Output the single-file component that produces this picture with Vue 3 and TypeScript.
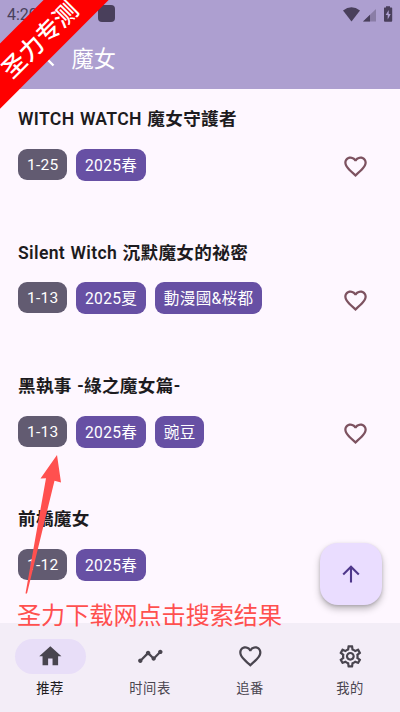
<script setup lang="ts">
interface Show {
  title: string
  episodes: string
  tags: string[]
}

interface NavItem {
  label: string
  icon: string
}

const heart =
  'M16.5 3c-1.74 0-3.41.81-4.5 2.09C10.91 3.81 9.24 3 7.5 3 4.42 3 2 5.42 2 8.5c0 3.78 3.4 6.86 8.55 11.54L12 21.35l1.45-1.32C18.6 15.36 22 12.28 22 8.5 22 5.42 19.58 3 16.5 3zm-4.4 15.55l-.1.1-.1-.1C7.14 14.24 4 11.39 4 8.5 4 6.5 5.5 5 7.5 5c1.54 0 3.04.99 3.57 2.36h1.87C13.46 5.99 14.96 5 16.5 5c2 0 3.5 1.5 3.5 3.5 0 2.89-3.14 5.74-7.9 10.05z'

const shows: Show[] = [
  { title: 'WITCH WATCH 魔女守護者', episodes: '1-25', tags: ['2025春'] },
  { title: 'Silent Witch 沉默魔女的祕密', episodes: '1-13', tags: ['2025夏', '動漫國&桜都'] },
  { title: '黑執事 -綠之魔女篇-', episodes: '1-13', tags: ['2025春', '豌豆'] },
  { title: '前橋魔女', episodes: '1-12', tags: ['2025春'] },
]

const navItems: NavItem[] = [
  { label: '推荐', icon: 'M10 20v-6h4v6h5v-8h3L12 3 2 12h3v8z' },
  {
    label: '时间表',
    icon: 'M23 8c0 1.1-.9 2-2 2-.18 0-.35-.02-.51-.07l-3.56 3.55c.05.16.07.34.07.52 0 1.1-.9 2-2 2s-2-.9-2-2c0-.18.02-.36.07-.52l-2.55-2.55c-.16.05-.34.07-.52.07s-.36-.02-.52-.07l-4.55 4.56c.05.16.07.33.07.51 0 1.1-.9 2-2 2s-2-.9-2-2 .9-2 2-2c.18 0 .35.02.51.07l4.56-4.55C8.02 9.36 8 9.18 8 9c0-1.1.9-2 2-2s2 .9 2 2c0 .18-.02.36-.07.52l2.55 2.55c.16-.05.34-.07.52-.07s.36.02.52.07l3.55-3.56C19.02 8.35 19 8.18 19 8c0-1.1.9-2 2-2s2 .9 2 2z',
  },
  { label: '追番', icon: heart },
  {
    label: '我的',
    icon: 'M19.43 12.98c.04-.32.07-.64.07-.98 0-.34-.03-.66-.07-.98l2.11-1.65c.19-.15.24-.42.12-.64l-2-3.46c-.09-.16-.26-.25-.44-.25-.06 0-.12.01-.17.03l-2.49 1c-.52-.4-1.08-.73-1.69-.98l-.38-2.65C14.46 2.18 14.25 2 14 2h-4c-.25 0-.46.18-.49.42l-.38 2.65c-.61.25-1.17.59-1.69.98l-2.49-1c-.06-.02-.12-.03-.18-.03-.17 0-.34.09-.43.25l-2 3.46c-.13.22-.07.49.12.64l2.11 1.65c-.04.32-.07.65-.07.98 0 .33.03.66.07.98l-2.11 1.65c-.19.15-.24.42-.12.64l2 3.46c.09.16.26.25.44.25.06 0 .12-.01.17-.03l2.49-1c.52.4 1.08.73 1.69.98l.38 2.65c.03.24.24.42.49.42h4c.25 0 .46-.18.49-.42l.38-2.65c.61-.25 1.17-.59 1.69-.98l2.49 1c.06.02.12.03.18.03.17 0 .34-.09.43-.25l2-3.46c.12-.22.07-.49-.12-.64l-2.11-1.65zm-1.98-1.71c.04.31.05.52.05.73 0 .21-.02.43-.05.73l-.14 1.13.89.7 1.08.84-.7 1.21-1.27-.51-1.04-.42-.9.68c-.43.32-.84.56-1.25.73l-1.06.43-.16 1.13-.2 1.35h-1.4l-.19-1.35-.16-1.13-1.06-.43c-.43-.18-.83-.41-1.23-.71l-.91-.7-1.06.43-1.27.51-.7-1.21 1.08-.84.89-.7-.14-1.13c-.03-.31-.05-.54-.05-.74s.02-.43.05-.73l.14-1.13-.89-.7-1.08-.84.7-1.21 1.27.51 1.04.42.9-.68c.43-.32.84-.56 1.25-.73l1.06-.43.16-1.13.2-1.35h1.39l.19 1.35.16 1.13 1.06.43c.43.18.83.41 1.23.71l.91.7 1.06-.43 1.27-.51.7 1.21-1.07.85-.89.7.14 1.13zM12 8c-2.21 0-4 1.79-4 4s1.79 4 4 4 4-1.79 4-4-1.79-4-4-4zm0 6c-1.1 0-2-.9-2-2s.9-2 2-2 2 .9 2 2-.9 2-2 2z',
  },
]
</script>

<template>
  <div class="screen">
    <header class="header">
      <div class="status">
        <span class="clock">4:20</span>
        <span class="notice"></span>
        <svg class="signals" viewBox="0 0 54 18" width="54" height="18">
          <path d="M1 5.500Q9.500-1 18 5.500L9.500 16.500z" fill="#493f5b" />
          <path d="M21 16.500L34 4V16.500z" fill="#8a7da6" />
          <path d="M21 16.500L28 9.700V16.500z" fill="#493f5b" />
          <path d="M42.500 2.500h1.500V1.200h4v1.300h1.500q.7 0 .7.800V15.700q0 1-.9 1h-6.400q-.9 0-.9-1V3.300q0-.8.500-.800z" fill="#493f5b" />
          <path d="M46.700 5l-3 5h2v4.500l3-5.500h-2z" fill="#ad9fd0" />
        </svg>
      </div>
      <div class="appbar">
        <svg class="back" viewBox="0 0 14 22" width="14" height="22">
          <path d="M12 2L3 11l9.500 9.500" fill="none" stroke="#fff" stroke-width="2.4" />
        </svg>
        <h1 class="heading">魔女</h1>
      </div>
    </header>

    <main class="list">
      <article v-for="show in shows" :key="show.title" class="show">
        <h2 class="title">{{ show.title }}</h2>
        <div class="meta">
          <span class="tag episodes">{{ show.episodes }}</span>
          <span v-for="tag in show.tags" :key="tag" class="tag">{{ tag }}</span>
          <svg class="favorite" viewBox="0 0 24 24"><path :d="heart" /></svg>
        </div>
      </article>
    </main>

    <nav class="nav">
      <div v-for="(item, i) in navItems" :key="item.label" class="nav-item" :class="{ active: i === 0 }">
        <span class="pill">
          <svg viewBox="0 0 24 24" class="nav-icon"><path :d="item.icon" /></svg>
        </span>
        <span class="label">{{ item.label }}</span>
      </div>
    </nav>

    <button class="fab" aria-label="Top">
      <svg viewBox="0 0 18 18" width="18" height="18">
        <path d="M9 17.500V2M1.200 9.500L9 1.700l7.800 7.800" fill="none" stroke="#4f378b" stroke-width="2.100" />
      </svg>
    </button>

    <svg class="pointer" viewBox="0 0 40 140" width="40" height="140">
      <path d="M33 1L37 28.500 30.500 26.700 3 139.500H1.500L22 24.300 16.500 24.500z" fill="#ff504f" />
    </svg>
    <div class="caption">圣力下载网点击搜索结果</div>

    <div class="ribbon"><span class="ribbon-text">圣力专测</span></div>
  </div>
</template>

<style>
body {
  margin: 0;
}
</style>

<style scoped>
.screen {
  position: relative;
  display: flex;
  flex-direction: column;
  width: 400px;
  height: 712px;
  overflow: hidden;
  background: #fef7ff;
  color: #1d1b20;
  font-family: Roboto, 'Noto Sans CJK SC', sans-serif;
}
.header {
  flex: none;
  height: 89px;
  background: #ad9fd0;
}
.status {
  display: flex;
  align-items: center;
  height: 27px;
  padding: 0 7px;
}
.clock {
  width: 91px;
  color: #493f5b;
  font-size: 16px;
  line-height: 27px;
  padding-top: 2px;
}
.notice {
  width: 17px;
  height: 17px;
  border-radius: 4px;
  background: #493f5b;
}
.signals {
  margin: 0 -3px 0 auto;
}
.appbar {
  display: flex;
  align-items: center;
  height: 62px;
  padding-left: 41px;
}
.back {
  margin-top: -4px;
}
.heading {
  margin: 1px 0 0 16.500px;
  color: #fff;
  font-size: 22.200px;
  line-height: 30px;
  font-weight: 400;
}
.list {
  flex: 1;
  min-height: 0;
  overflow: hidden;
}
.show {
  box-sizing: border-box;
  height: 133.400px;
  padding: 17.200px 31px 0 18px;
}
.title {
  margin: 0;
  height: 26px;
  line-height: 26px;
  font-size: 17.600px;
  font-weight: 600;
  letter-spacing: 0.340px;
  word-spacing: 0.700px;
  white-space: nowrap;
}
.meta {
  display: flex;
  align-items: flex-start;
  gap: 9px;
  margin-top: 16.800px;
}
.tag {
  box-sizing: border-box;
  height: 32px;
  padding: 1px 8.700px 0 9px;
  border-radius: 9px;
  background: #6750a4;
  color: #fff;
  font-size: 15.600px;
  line-height: 32px;
  letter-spacing: 0.300px;
  white-space: nowrap;
}
.episodes {
  width: 49px;
  height: 31px;
  background: #625b71;
  font-size: 15.500px;
  line-height: 30px;
}
.favorite {
  width: 27px;
  height: 27px;
  margin: 4.400px 0 0 auto;
  fill: #7d5260;
}
.nav {
  flex: none;
  display: grid;
  grid-template-columns: repeat(4, 1fr);
  height: 89px;
  background: #f3edf7;
}
.nav-item {
  display: flex;
  flex-direction: column;
  align-items: center;
  padding-top: 15.500px;
  color: #49454f;
}
.pill {
  display: flex;
  align-items: center;
  justify-content: center;
  width: 71px;
  height: 35.500px;
  border-radius: 18px;
}
.active .pill {
  background: #e8def8;
}
.nav-icon {
  width: 26.670px;
  height: 26.670px;
  fill: #49454f;
}
.label {
  margin-top: 5px;
  font-size: 13.300px;
  line-height: 20px;
  letter-spacing: 0.500px;
}
.active .label {
  color: #1d1b20;
}
.fab {
  position: absolute;
  left: 320px;
  top: 543px;
  display: flex;
  align-items: center;
  justify-content: center;
  width: 62px;
  height: 62px;
  padding: 0;
  border: 0;
  border-radius: 18px;
  background: #eaddff;
  box-shadow: 0 4px 7px rgba(0, 0, 0, 0.25), 0 1px 3px rgba(0, 0, 0, 0.15);
}
.pointer {
  position: absolute;
  left: 24px;
  top: 454px;
}
.caption {
  position: absolute;
  left: 17px;
  top: 596px;
  color: #ff504f;
  font-family: 'Noto Sans CJK SC', sans-serif;
  font-size: 24.100px;
  font-weight: 400;
  line-height: 36px;
  white-space: nowrap;
}
.ribbon {
  position: absolute;
  left: -62px;
  top: 15px;
  display: flex;
  align-items: center;
  justify-content: center;
  width: 200px;
  height: 45.500px;
  background: #ff0000;
  transform: rotate(-45deg);
}
.ribbon-text {
  padding-top: 7px;
  color: #fff;
  font-size: 24px;
  font-weight: 500;
  line-height: 28px;
}
</style>
